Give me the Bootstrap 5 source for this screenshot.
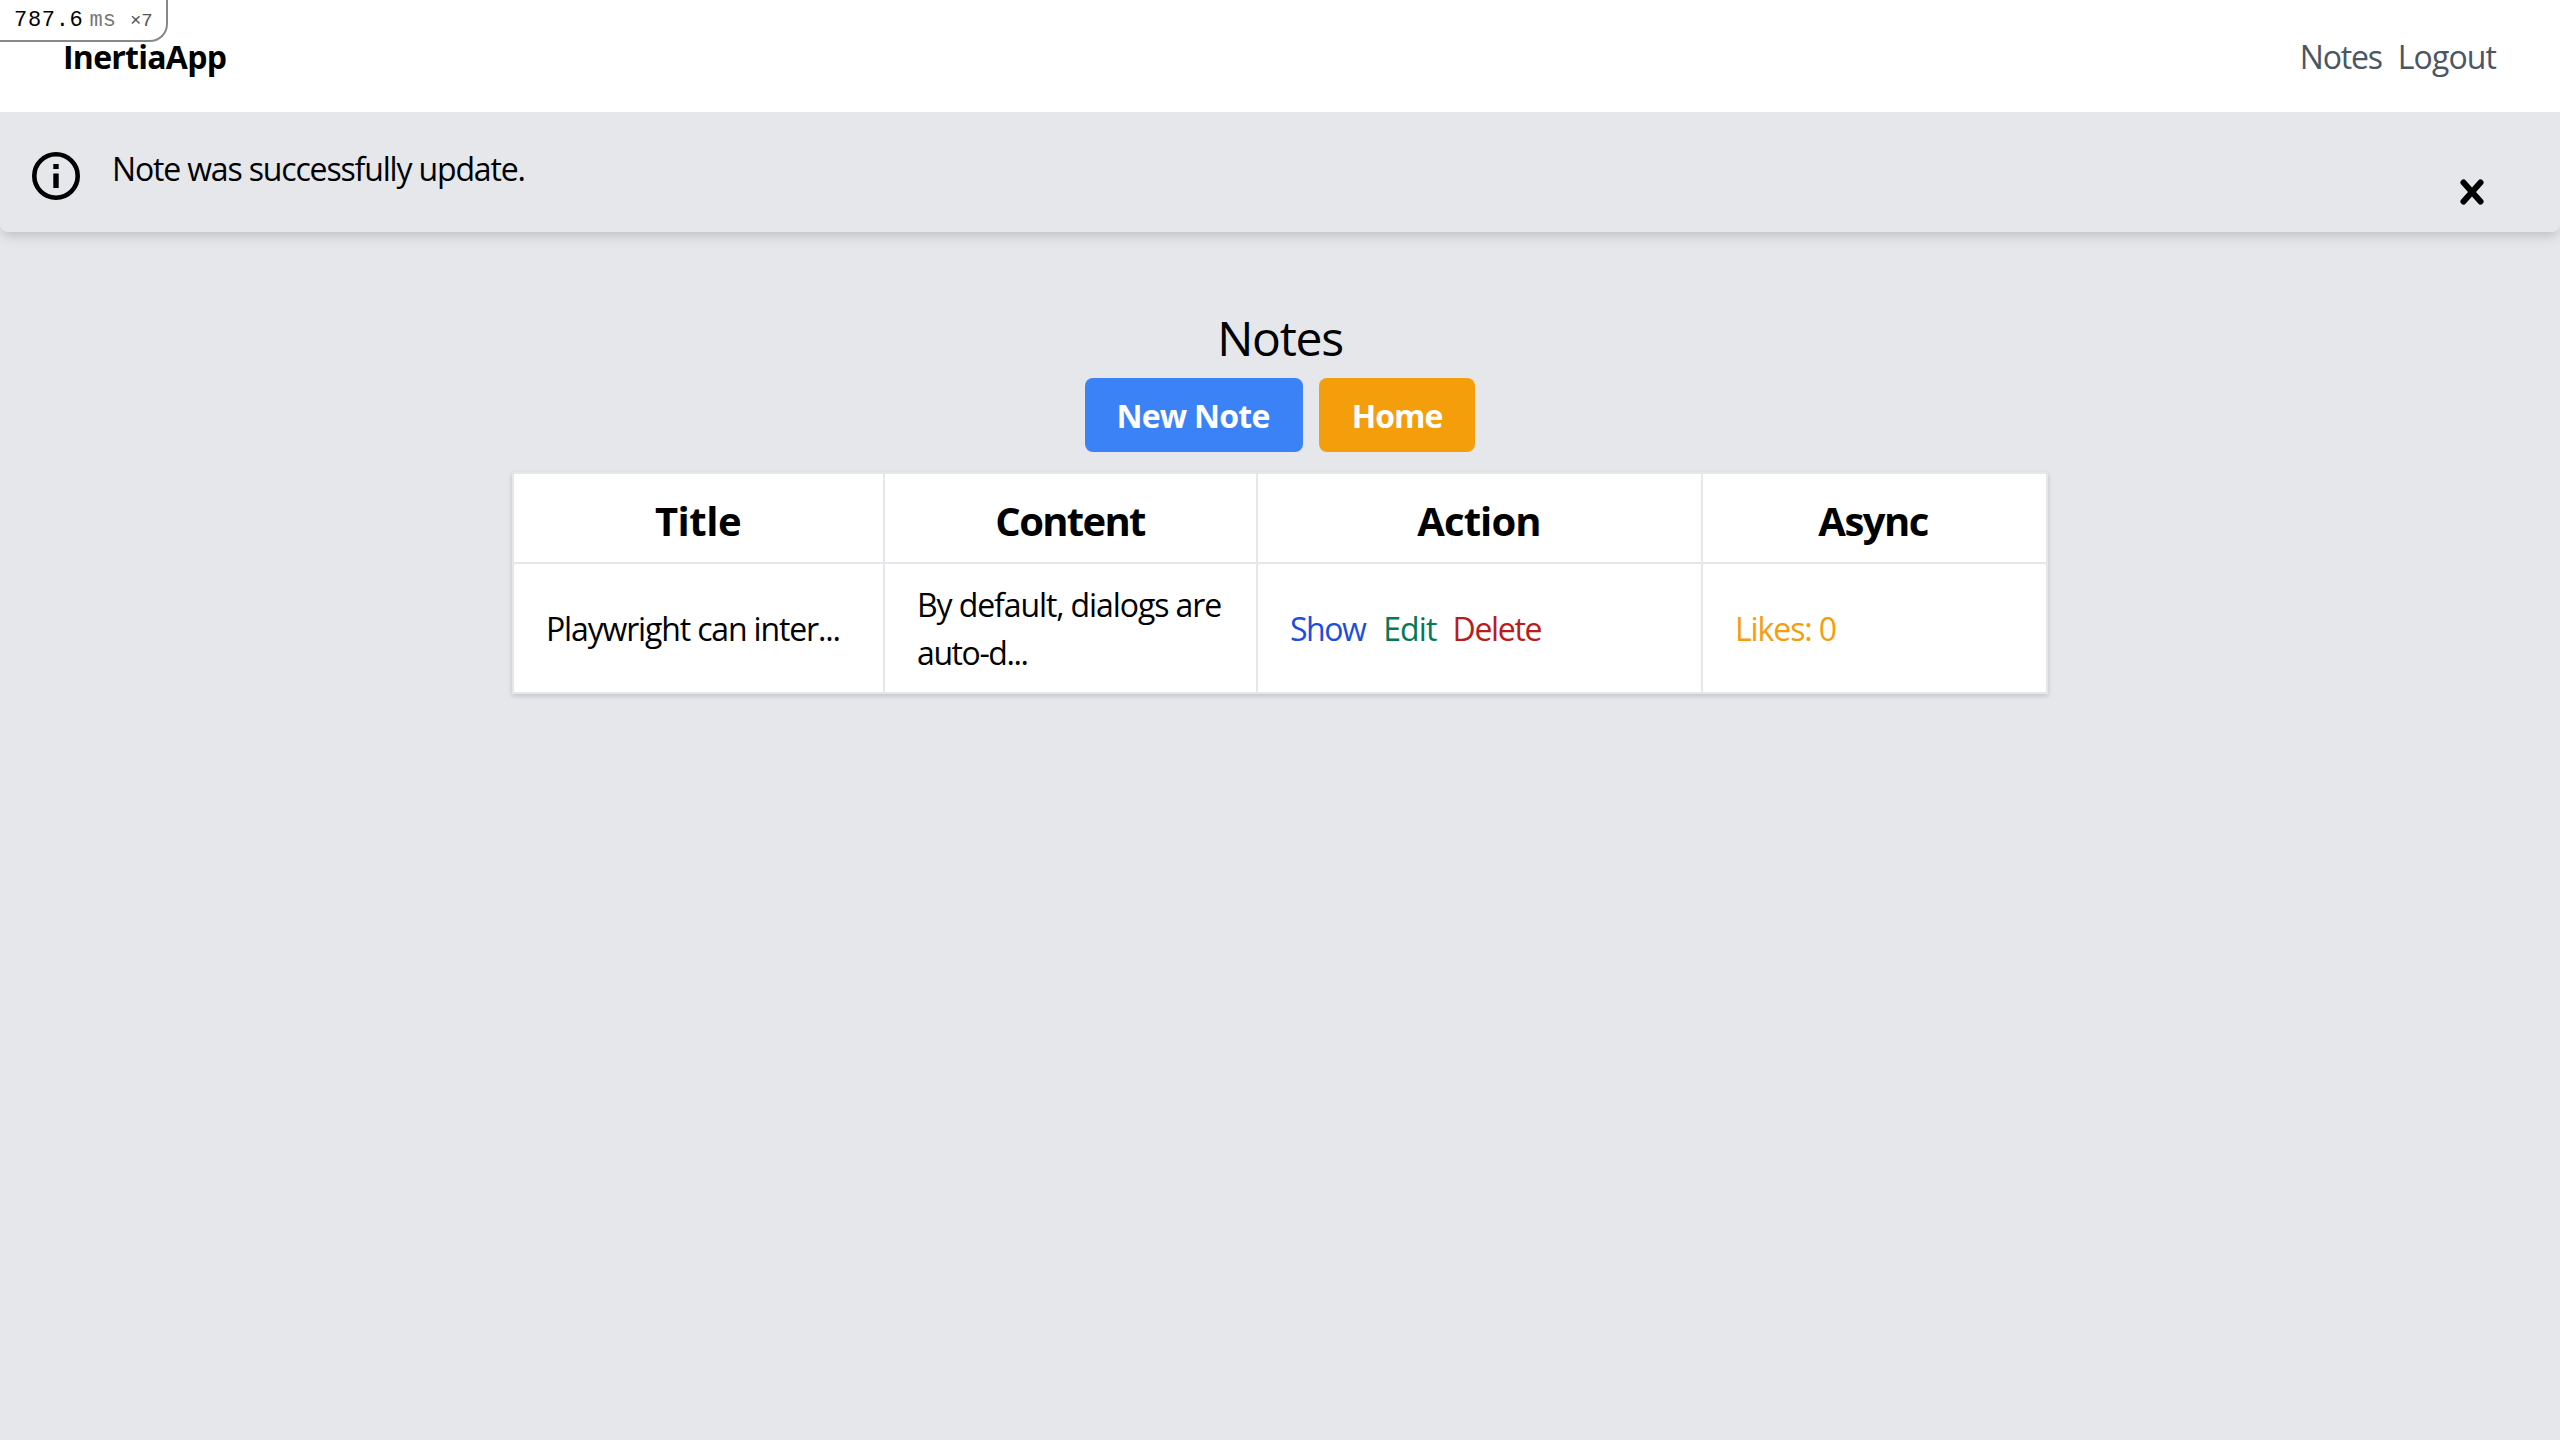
<!DOCTYPE html>
<html lang="en">
<head>
<meta charset="utf-8">
<meta name="viewport" content="width=device-width, initial-scale=1">
<title>InertiaApp</title>
<link href="https://cdn.jsdelivr.net/npm/bootstrap@5.3.0/dist/css/bootstrap.min.css" rel="stylesheet">
<style>
body{background:#e5e7eb;color:#000;font:32px/48px "Open Sans",sans-serif;min-height:1440px}
a{text-decoration:none}
.top-nav{height:112px;padding:2px 64px 0 63px}
.brand{font-weight:700;color:#000;letter-spacing:-.75px}
.nav-item-link{color:#4b5563;letter-spacing:-1.2px}
.nav-item-link + .nav-item-link{letter-spacing:-.9px}
.profiler{top:0;left:0;width:168px;height:42px;background:#fff;border:solid #888;border-width:0 2px 2px 0;border-radius:0 0 18px 0;font:22px/42px "Liberation Mono",monospace;padding-left:14px;white-space:pre}
.profiler-time{letter-spacing:.7px}
.profiler-unit{color:#777;margin-left:6px}
.profiler-count{color:#555;font-size:19px;margin-left:14px}
.flash{height:120px;background:#e5e7eb;border-radius:0 0 8px 8px;box-shadow:0 8px 12px -2px rgba(0,0,0,.1),0 4px 8px -2px rgba(0,0,0,.06);padding:32px 72px 32px 32px}
.flash-text{margin:1px auto 0 32px;letter-spacing:-1.16px}
.notes-page{padding-top:74px}
.page-title{font-size:48px;line-height:64px;font-weight:400;letter-spacing:-1.25px;margin:0 0 8px}
.pill{height:74px;padding:0 32px;border-radius:8px;color:#fff;font-weight:700;line-height:76px;text-align:center}
.pill-new{width:218px;padding:0 33px 0 31px;background:#3b82f6;letter-spacing:-.76px}
.pill-home{width:156px;background:#f59e0b;letter-spacing:-1px}
.notes-table{width:1536px;margin-top:20px;table-layout:fixed;border-collapse:collapse;background:#fff;box-shadow:0 2px 6px rgba(0,0,0,.1),0 2px 4px rgba(0,0,0,.06)}
.notes-table th,.notes-table td{border:2px solid #e5e7eb;white-space:nowrap}
.notes-table td{padding:17px 32px 15px;letter-spacing:-1.15px}
.notes-table th{font-size:40px;line-height:56px;text-align:center;padding:19px 32px 13px 31px}
.col-title{width:371px;letter-spacing:-.5px}
.col-content{width:373px;letter-spacing:-1.7px}
.col-action{width:445px;letter-spacing:-.9px}
.notes-table .col-async{width:345px;padding-right:34px;letter-spacing:-1.55px}
.notes-table .note-content{padding-left:32px;letter-spacing:-1.1px}
.note-rest{letter-spacing:-1.4px}
.act-show{color:#1d4ed8;letter-spacing:-1.5px;margin-right:2px}
.act-edit{color:#047857;letter-spacing:-.9px}
.act-delete{color:#b91c1c;letter-spacing:-1.3px}
.act-like{color:#f59e0b;letter-spacing:-1.1px}
</style>
<script src="https://cdn.jsdelivr.net/npm/bootstrap@5.3.0/dist/js/bootstrap.bundle.min.js"></script>
</head>
<body>
<div class="profiler position-absolute z-3"><span class="profiler-time">787.6</span><span class="profiler-unit">ms</span><span class="profiler-count">×7</span></div>
<nav class="top-nav bg-white d-flex align-items-center justify-content-between">
  <a class="brand" href="#">InertiaApp</a>
  <div class="d-flex gap-3"><a class="nav-item-link" href="#">Notes</a><a class="nav-item-link" href="#">Logout</a></div>
</nav>
<div class="flash d-flex align-items-start">
  <svg width="48" height="64" viewBox="0 0 48 64" fill="none" stroke="#000"><circle cx="24" cy="32" r="21.700" stroke-width="4.600"/><path d="M24 20v5M24 29.500v14.500" stroke-width="5.400"/></svg>
  <span class="flash-text">Note was successfully update.</span>
  <svg width="32" height="96" viewBox="0 0 32 96"><path d="M7.500 38.500 24.500 57.500M24.500 38.500 7.500 57.500" stroke="#000" stroke-width="6" stroke-linecap="round"/></svg>
</div>
<main class="notes-page d-flex flex-column align-items-center">
  <h1 class="page-title">Notes</h1>
  <div class="d-flex gap-3">
    <a class="pill pill-new" href="#">New Note</a>
    <a class="pill pill-home" href="#">Home</a>
  </div>
  <table class="notes-table">
    <thead>
      <tr><th class="col-title">Title</th><th class="col-content">Content</th><th class="col-action">Action</th><th class="col-async">Async</th></tr>
    </thead>
    <tbody>
      <tr>
        <td>Playwright can inter...</td>
        <td class="note-content">By default, dialogs are<br><span class="note-rest">auto-d...</span></td>
        <td><div class="d-flex gap-3"><a class="act-show" href="#">Show</a><a class="act-edit" href="#">Edit</a><a class="act-delete" href="#">Delete</a></div></td>
        <td><a class="act-like" href="#">Likes: 0</a></td>
      </tr>
    </tbody>
  </table>
</main>
</body>
</html>
